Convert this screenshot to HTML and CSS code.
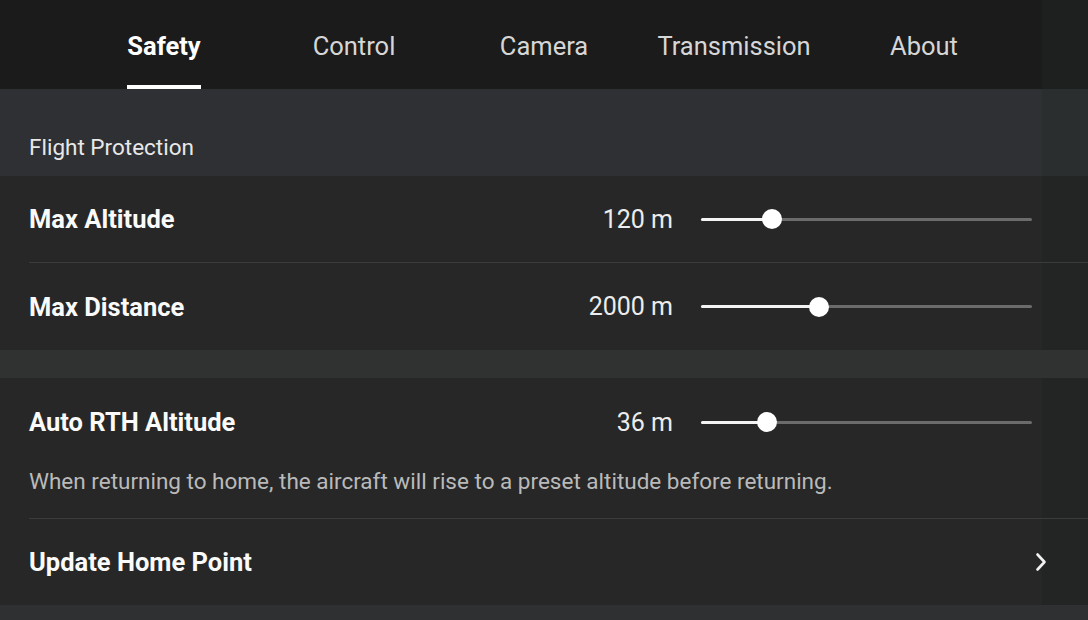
FILE: index.html
```html
<!DOCTYPE html>
<html lang="en">
<head>
<meta charset="utf-8">
<title>Safety Settings</title>
<link rel="stylesheet" href="styles.css">
</head>
<body>
<div class="page">
  <nav class="tabs">
    <div class="tab active"><span class="tab-label">Safety</span></div>
    <div class="tab"><span class="tab-label">Control</span></div>
    <div class="tab"><span class="tab-label">Camera</span></div>
    <div class="tab"><span class="tab-label">Transmission</span></div>
    <div class="tab"><span class="tab-label">About</span></div>
  </nav>

  <div class="section-head">Flight Protection</div>

  <div class="row">
    <div class="row-inner divided">
      <span class="label">Max Altitude</span>
      <span class="value">120 m</span>
      <div class="slider"><div class="fill" style="width:21.5%"></div><div class="thumb" style="left:21.5%"></div></div>
    </div>
  </div>

  <div class="row">
    <div class="row-inner">
      <span class="label">Max Distance</span>
      <span class="value">2000 m</span>
      <div class="slider"><div class="fill" style="width:35.6%"></div><div class="thumb" style="left:35.6%"></div></div>
    </div>
  </div>

  <div class="gap"></div>

  <div class="row">
    <div class="row-block divided">
      <div class="row-head">
        <span class="label">Auto RTH Altitude</span>
        <span class="value">36 m</span>
        <div class="slider"><div class="fill" style="width:20%"></div><div class="thumb" style="left:20%"></div></div>
      </div>
      <p class="desc">When returning to home, the aircraft will rise to a preset altitude before returning.</p>
    </div>
  </div>

  <div class="row">
    <div class="row-inner link">
      <span class="label">Update Home Point</span>
      <svg class="chevron" width="14" height="20" viewBox="0 0 14 20"><path d="M3.5 2.5 L10.5 10 L3.5 17.5" fill="none" stroke="#f2f2f2" stroke-width="2.6" stroke-linecap="round" stroke-linejoin="round"/></svg>
    </div>
  </div>

  <div class="bottom"></div>
</div>
</body>
</html>
```

FILE: styles.css
```css
* { box-sizing: border-box; }
html, body {
  margin: 0;
  padding: 0;
  background: #272727;
}
body {
  font-family: Roboto, "Noto Sans", "Liberation Sans", sans-serif;
  width: 1088px;
  height: 620px;
  overflow: hidden;
}
.page {
  display: flex;
  flex-direction: column;
  width: 1088px;
  height: 620px;
}

.tabs {
  display: flex;
  height: 89px;
  padding-left: 69px;
  background: linear-gradient(to right, #1b1b1b 1042px, #1e1f1f 1042px);
}
.tab {
  width: 190px;
  display: flex;
  justify-content: center;
  align-items: flex-end;
}
.tab-label {
  font-size: 25.5px;
  line-height: 30px;
  color: #d6d6d6;
  padding-bottom: 24px;
  border-bottom: 4px solid transparent;
}
.tab.active .tab-label {
  color: #ffffff;
  font-weight: 700;
  border-bottom-color: #ffffff;
}

.section-head {
  height: 87px;
  padding: 28px 0 0 29px;
  display: flex;
  align-items: center;
  font-size: 22.5px;
  color: #e8e8e8;
  background: linear-gradient(to right, #2f3033 1042px, #2b2e2e 1042px);
}

.row {
  padding-left: 29px;
  background: linear-gradient(to right, #272727 1042px, #222524 1042px);
}
.row-inner, .row-head {
  height: 87px;
  display: flex;
  align-items: center;
  padding-right: 56px;
}
.row-head { height: 88px; }
.divided { border-bottom: 1px solid #3a3b3c; }

.label {
  flex: 1;
  font-size: 25.5px;
  font-weight: 700;
  color: #fafafa;
}
.value {
  font-size: 25px;
  color: #ececec;
  text-align: right;
}
.slider {
  position: relative;
  width: 331px;
  height: 3px;
  margin-left: 28px;
  background: #6b6b6b;
  border-radius: 2px;
}
.fill {
  height: 3px;
  background: #f4f4f4;
  border-radius: 2px;
}
.thumb {
  position: absolute;
  top: 50%;
  width: 20px;
  height: 20px;
  margin: -10px 0 0 -10px;
  border-radius: 50%;
  background: #ffffff;
}

.gap {
  height: 28px;
  background: #303131;
}

.row-block {
  padding-bottom: 22px;
}
.desc {
  margin: 0;
  font-size: 22.5px;
  line-height: 30px;
  color: #bababa;
}

.row-inner.link {
  height: 86px;
  padding-right: 40px;
}
.chevron { display: block; }

.bottom {
  flex: 1;
  background: #2e3031;
}
```
